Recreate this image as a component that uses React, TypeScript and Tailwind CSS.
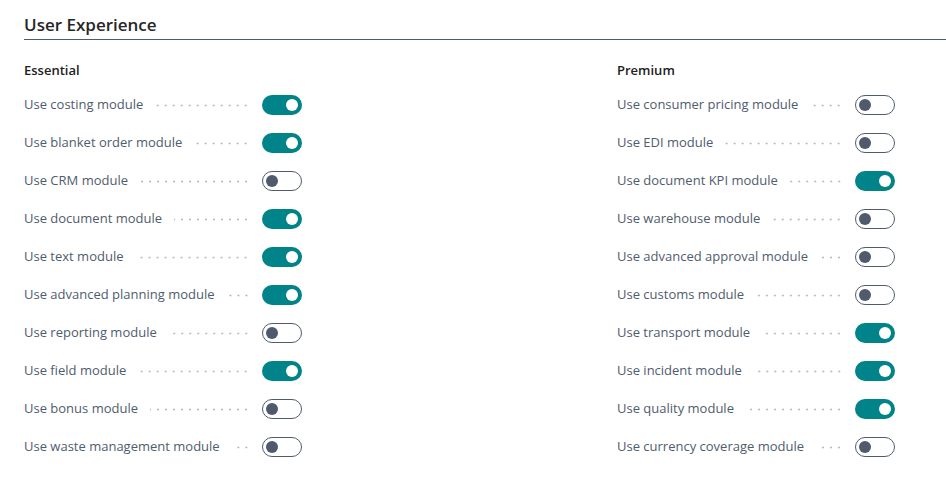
const essential: [string, boolean][] = [
  ['Use costing module', true],
  ['Use blanket order module', true],
  ['Use CRM module', false],
  ['Use document module', true],
  ['Use text module', true],
  ['Use advanced planning module', true],
  ['Use reporting module', false],
  ['Use field module', true],
  ['Use bonus module', false],
  ['Use waste management module', false],
]

const premium: [string, boolean][] = [
  ['Use consumer pricing module', false],
  ['Use EDI module', false],
  ['Use document KPI module', true],
  ['Use warehouse module', false],
  ['Use advanced approval module', false],
  ['Use customs module', false],
  ['Use transport module', true],
  ['Use incident module', true],
  ['Use quality module', true],
  ['Use currency coverage module', false],
]

function Toggle({ on }: { on: boolean }) {
  return on ? (
    <span className="flex h-5 w-10 shrink-0 items-center justify-end rounded-full bg-[#008489] pr-1">
      <span className="h-3 w-3 rounded-full bg-white" />
    </span>
  ) : (
    <span className="flex h-5 w-10 shrink-0 items-center rounded-full border border-[#505c6d] bg-white pl-[3px]">
      <span className="h-3 w-3 rounded-full bg-[#4f5b6c]" />
    </span>
  )
}

function Row({ label, on }: { label: string; on: boolean }) {
  return (
    <div className="flex h-[38px] items-center">
      <div className="flex w-[226px] items-center">
        <span className="whitespace-nowrap text-[13px] text-[#505c6d]">{label}</span>
        <span className="ml-3 h-[3px] flex-1 bg-[radial-gradient(circle,#b8b8b8_0.9px,transparent_1.2px)] bg-size-[8px_3px] bg-right bg-repeat-x" />
      </div>
      <div className="ml-3">
        <Toggle on={on} />
      </div>
    </div>
  )
}

function Group({ title, rows }: { title: string; rows: [string, boolean][] }) {
  return (
    <div>
      <h3 className="h-[16px] text-[13px] font-semibold leading-4 text-[#212121]">{title}</h3>
      <div className="mt-[8px]">
        {rows.map(([label, on]) => (
          <Row key={label} label={label} on={on} />
        ))}
      </div>
    </div>
  )
}

export default function App() {
  return (
    <div className="h-[497px] w-[946px] bg-white pl-6 pt-[13px]" style={{ fontFamily: '"Open Sans", sans-serif' }}>
      <h2 className="border-b border-[#505c6d] pb-[3px] text-[17px] font-semibold leading-[23px] text-[#262626]">
        User Experience
      </h2>
      <div className="mt-[22px] flex">
        <div className="w-[593px]">
          <Group title="Essential" rows={essential} />
        </div>
        <div>
          <Group title="Premium" rows={premium} />
        </div>
      </div>
    </div>
  )
}
